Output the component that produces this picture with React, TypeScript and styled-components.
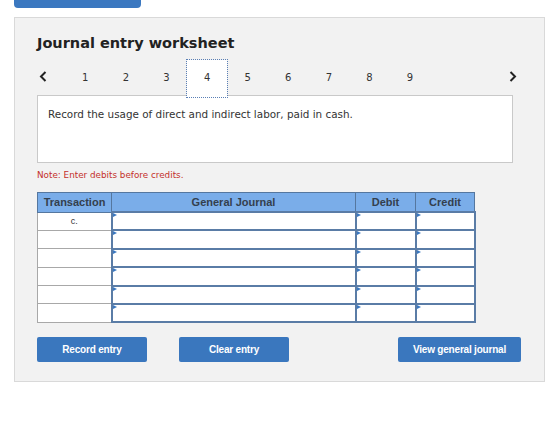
import React from "react";
import styled, { createGlobalStyle } from "styled-components";

const Global = createGlobalStyle`
  html, body { margin: 0; padding: 0; background: #ffffff; }
  body { font-family: "DejaVu Sans", Verdana, sans-serif; color: #333; }
`;

const Page = styled.div`
  padding-left: 14px;
  width: 532px;
`;

const TopTab = styled.div`
  width: 127px;
  height: 8px;
  background: #3b78c0;
  border-radius: 0 0 4px 4px;
`;

const Panel = styled.div`
  margin-top: 9px;
  width: 531px;
  box-sizing: border-box;
  background: #f2f2f2;
  border: 1px solid #d9d9d9;
  padding: 16px 32px 19px 22px;
`;

const Title = styled.h1`
  margin: 0;
  font-family: "DejaVu Sans", Verdana, sans-serif;
  font-weight: bold;
  font-size: 14.5px;
  line-height: 18px;
  color: #222;
`;

const Pager = styled.div`
  position: relative;
  z-index: 1;
  display: flex;
  align-items: stretch;
  width: 490px;
  height: 37px;
  margin-top: 8px;
`;

const Arrow = styled.div<{ $side: "left" | "right" }>`
  width: 28px;
  display: flex;
  align-items: center;
  justify-content: ${(p) => (p.$side === "left" ? "flex-start" : "center")};
  padding-left: ${(p) => (p.$side === "left" ? "2px" : "0")};
  margin-left: ${(p) => (p.$side === "right" ? "auto" : "0")};
  box-sizing: border-box;
  padding-bottom: 4px;
`;

const PageItem = styled.div<{ $active?: boolean }>`
  width: 40.6px;
  display: flex;
  align-items: center;
  justify-content: center;
  font-size: 10px;
  color: #333;
  box-sizing: border-box;
  background: ${(p) => (p.$active ? "#ffffff" : "transparent")};
  outline: ${(p) => (p.$active ? "1px dotted #5a7fb5" : "none")};
  padding-bottom: 3px;
`;

const Question = styled.div`
  margin-top: -2px;
  width: 476px;
  height: 68px;
  box-sizing: border-box;
  background: #fff;
  border: 1px solid #c9c9c9;
  padding: 12px 10px;
  font-size: 10.4px;
  line-height: 13px;
  color: #333;
`;

const Note = styled.div`
  margin-top: 7px;
  font-size: 8.8px;
  line-height: 11px;
  color: #c4302b;
`;

const Table = styled.table`
  margin-top: 11px;
  border-collapse: collapse;
  table-layout: fixed;
  font-family: "Liberation Sans", Arial, sans-serif;
`;

const Th = styled.th<{ $w: number }>`
  width: ${(p) => p.$w}px;
  height: 18px;
  padding: 0;
  background: #7aade9;
  border: 1px solid #55779f;
  font-weight: bold;
  font-size: 11px;
  color: #34404e;
  text-align: center;
`;

const Tr = styled.tr`
  height: 18.4px;
`;

const TxCell = styled.td`
  padding: 0;
  background: #fff;
  border: 1px solid #a8a8a8;
  font-size: 9px;
  color: #333;
  text-align: center;
  vertical-align: top;
  line-height: 16px;
`;

const InputCell = styled.td`
  position: relative;
  padding: 0;
  background: #fff;
  border: 2px solid #5a7ca6;
`;

const Marker = styled.span`
  position: absolute;
  left: 0;
  top: 0;
  width: 0;
  height: 0;
  border-top: 2.5px solid transparent;
  border-bottom: 2.5px solid transparent;
  border-left: 4px solid #3b78c0;
`;

const Buttons = styled.div`
  display: flex;
  gap: 32px;
  margin-top: 14px;
  width: 484px;
`;

const Button = styled.button<{ $w: number; $push?: boolean }>`
  width: ${(p) => p.$w}px;
  height: 25px;
  margin-left: ${(p) => (p.$push ? "auto" : "0")};
  border: none;
  border-radius: 2px;
  background: #3a77be;
  color: #fff;
  font-family: "Liberation Sans", Arial, sans-serif;
  font-weight: bold;
  font-size: 10px;
  letter-spacing: -0.2px;
  padding: 0;
`;

const Chevron = ({ dir }: { dir: "left" | "right" }) => (
  <svg width="8" height="11" viewBox="0 0 8 11">
    <path
      d={dir === "left" ? "M6.5 1 L2 5.5 L6.5 10" : "M1.5 1 L6 5.5 L1.5 10"}
      fill="none"
      stroke="#222"
      strokeWidth="2"
    />
  </svg>
);

export default function App() {
  const rows = ["c.", "", "", "", "", ""];
  return (
    <>
      <Global />
      <Page>
        <TopTab />
        <Panel>
          <Title>Journal entry worksheet</Title>
          <Pager>
            <Arrow $side="left">
              <Chevron dir="left" />
            </Arrow>
            {[1, 2, 3, 4, 5, 6, 7, 8, 9].map((n) => (
              <PageItem key={n} $active={n === 4}>
                {n}
              </PageItem>
            ))}
            <Arrow $side="right">
              <Chevron dir="right" />
            </Arrow>
          </Pager>
          <Question>Record the usage of direct and indirect labor, paid in cash.</Question>
          <Note>Note: Enter debits before credits.</Note>
          <Table>
            <thead>
              <tr>
                <Th $w={73}>Transaction</Th>
                <Th $w={243}>General Journal</Th>
                <Th $w={59}>Debit</Th>
                <Th $w={58}>Credit</Th>
              </tr>
            </thead>
            <tbody>
              {rows.map((t, i) => (
                <Tr key={i}>
                  <TxCell>{t}</TxCell>
                  <InputCell>
                    <Marker />
                  </InputCell>
                  <InputCell>
                    <Marker />
                  </InputCell>
                  <InputCell>
                    <Marker />
                  </InputCell>
                </Tr>
              ))}
            </tbody>
          </Table>
          <Buttons>
            <Button $w={110}>Record entry</Button>
            <Button $w={110}>Clear entry</Button>
            <Button $w={123} $push>
              View general journal
            </Button>
          </Buttons>
        </Panel>
      </Page>
    </>
  );
}
